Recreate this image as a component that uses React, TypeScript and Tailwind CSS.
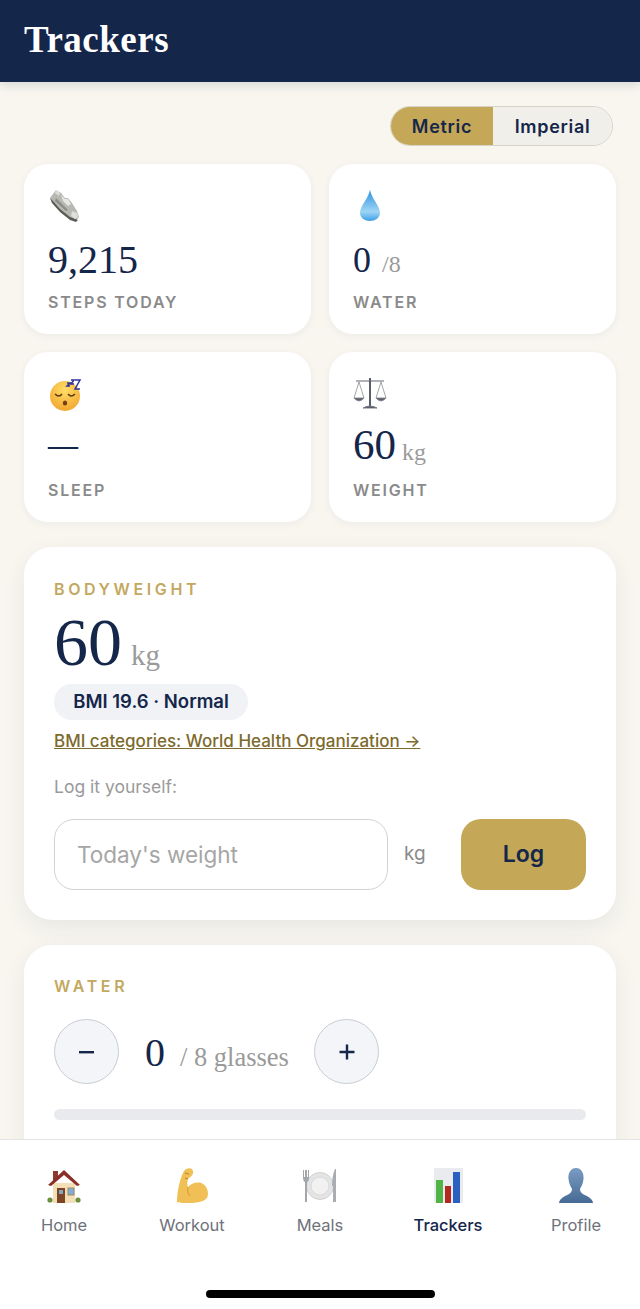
import type { ReactNode } from "react";

const serif = "font-['Liberation_Serif',serif]";

function ShoeIcon() {
  return (
    <svg width="34" height="34" viewBox="0 0 34 34">
      <path d="M8 1 L13 4 L17 9 L20 9 L24 14 L29 22 L31 28 L28 32 L22 29 L12 21 L4 13 L2 9 Z" fill="#b8b8b2" />
      <path d="M2 9 L4 14 L12 23 L22 31 L28 33 L30 31 L22 28 L12 20 L5 12 Z" fill="#5a5a54" />
      <path d="M13 6 L17 10 L20 10 L23 15 L20 17 L15 12 Z" fill="#e6e6e2" />
      <path d="M8 9 L20 21 L18 22 L7 12 Z" fill="#8e8e88" />
      <path d="M24 22 L29 24 L30 28 L27 30 L23 27 Z" fill="#dededa" />
      <path d="M8 1 L12 4 L11 7 L7 4 Z" fill="#dcdcd8" />
    </svg>
  );
}

function DropIcon() {
  return (
    <svg width="34" height="34" viewBox="0 0 34 34">
      <defs>
        <linearGradient id="drop" x1="0" y1="0" x2="0" y2="1">
          <stop offset="0" stopColor="#2f93dd" />
          <stop offset="0.7" stopColor="#9ed5f6" />
          <stop offset="1" stopColor="#3d9fe6" />
        </linearGradient>
      </defs>
      <path d="M17 1 C19 10 27 17 27 24 C27 29 22 32 17 32 C12 32 7 29 7 24 C7 17 15 10 17 1 Z" fill="url(#drop)" />
    </svg>
  );
}

function SleepIcon() {
  return (
    <svg width="34" height="34" viewBox="0 0 34 34">
      <defs>
        <radialGradient id="face" cx="0.5" cy="0.3" r="0.8">
          <stop offset="0" stopColor="#ffdd67" />
          <stop offset="1" stopColor="#f0a028" />
        </radialGradient>
      </defs>
      <circle cx="17" cy="19" r="15" fill="url(#face)" />
      <path d="M7 17 Q11 21 14 17 M20 17 Q23 21 27 17" stroke="#5c3a10" strokeWidth="1.4" fill="none" />
      <ellipse cx="17" cy="26" rx="2.2" ry="2.6" fill="#7a3b16" />
      <path d="M19 6 h3 l-3 3 h3 M23 3 h3 l-3 4 h3 M27 3 h5 l-5 9 h5" stroke="#33329a" strokeWidth="1.5" fill="none" />
    </svg>
  );
}

function ScalesIcon() {
  return (
    <svg width="34" height="34" viewBox="0 0 34 34" fill="none" stroke="#7b7f88">
      <path d="M3 4 H31" strokeWidth="1.2" />
      <path d="M17 1 V29" stroke="#5a5e68" strokeWidth="2" />
      <path d="M6 5 L1 21 M6 5 L11 21 M28 5 L23 21 M28 5 L33 21" strokeWidth="0.7" />
      <path d="M1 21 Q6 27 11 21 Z M23 21 Q28 27 33 21 Z" fill="#5f636c" strokeWidth="0.8" />
      <path d="M10 31 Q17 27 24 31 Z" fill="#3f434d" strokeWidth="1" />
    </svg>
  );
}

function HouseIcon() {
  return (
    <svg width="36" height="36" viewBox="0 0 36 36">
      <circle cx="4" cy="32" r="2.6" fill="#6b8f3a" />
      <circle cx="32" cy="32" r="2.6" fill="#6b8f3a" />
      <rect x="7" y="15" width="22" height="20" fill="#f3dfb6" />
      <rect x="7" y="3" width="5" height="9" fill="#8e3a2e" />
      <path d="M2 17 L18 2 L34 17 L31 18 L18 7 L5 18 Z" fill="#8a2f28" />
      <rect x="11" y="20" width="8" height="15" fill="#7e4426" />
      <rect x="13" y="22" width="4" height="4" fill="#7fa7c4" />
      <rect x="22" y="20" width="6" height="7" fill="#78aee0" stroke="#a9865a" />
    </svg>
  );
}

function MuscleIcon() {
  return (
    <svg width="36" height="36" viewBox="0 0 36 36">
      <path
        d="M10 3 C12 0 18 -1 19 3 C20 7 16 9 14 11 C13 14 13 17 14 19 C17 15 25 13 29 16 C34 19 35 26 33 30 C30 34 22 35 15 35 C11 35 6 35 3 34 C3 26 5 12 10 3 Z"
        fill="#f0bf55"
      />
      <path d="M11 5 L15 6 M14 11 L11 10" stroke="#b8862a" strokeWidth="1" fill="none" />
      <path d="M14 19 C13 23 14 26 16 28" stroke="#d99b30" strokeWidth="1" fill="none" />
    </svg>
  );
}

function PlateIcon() {
  return (
    <svg width="36" height="36" viewBox="0 0 36 36">
      <circle cx="18" cy="18" r="13.5" fill="#e4e4e4" stroke="#d2d2d2" />
      <circle cx="18" cy="18" r="9" fill="#f1f1f1" stroke="#dadada" />
      <path d="M1 2 V10 Q1 13 3 14 V34 H5 V14 Q7 13 7 10 V2 H6 V9 H5 V2 H3 V9 H2 V2 Z" fill="#a3a7ab" />
      <path d="M33 1 Q30 8 30 18 H31 V34 H34 V1 Z" fill="#a9adb1" />
    </svg>
  );
}

function ChartIcon() {
  return (
    <svg width="36" height="36" viewBox="0 0 36 36">
      <rect x="4" y="0" width="29" height="35" fill="#e9ebee" />
      <rect x="6" y="12" width="7" height="23" fill="#52b447" />
      <rect x="15" y="18" width="6" height="17" fill="#b5271f" />
      <rect x="23" y="4" width="7" height="31" fill="#2a61c0" />
    </svg>
  );
}

function BustIcon() {
  return (
    <svg width="36" height="36" viewBox="0 0 36 36">
      <defs>
        <linearGradient id="bust" x1="0" y1="0" x2="0" y2="1">
          <stop offset="0" stopColor="#7a9cc4" />
          <stop offset="1" stopColor="#456a94" />
        </linearGradient>
      </defs>
      <path
        d="M18 0 C24 0 26 6 25.5 11 C25 16 23 19 22 21 C22 24 24 26 29 28 C33 30 35 33 35 35 H1 C1 33 3 30 7 28 C12 26 14 24 14 21 C13 19 11 16 10.5 11 C10 6 12 0 18 0 Z"
        fill="url(#bust)"
      />
    </svg>
  );
}

function StatCard({
  icon,
  value,
  valueClass,
  unit,
  unitClass,
  label,
}: {
  icon: ReactNode;
  value: string;
  valueClass: string;
  unit?: string;
  unitClass?: string;
  label: string;
}) {
  return (
    <div className="h-[170px] rounded-[24px] bg-white pl-6 pt-[25px] shadow-[0_2px_8px_rgba(20,38,74,0.05)]">
      <div className="h-[34px]">{icon}</div>
      <div className={`${serif} mt-[14px] flex h-[46px] items-baseline text-[#14264a]`}>
        <span className={`leading-[46px] ${valueClass}`}>{value}</span>
        {unit && <span className={`text-[24px] text-[#9a9a9a] ${unitClass}`}>{unit}</span>}
      </div>
      <div className="mt-[9px] text-[16px] leading-[20px] font-semibold tracking-[1.8px] text-[#8a8a8a]">{label}</div>
    </div>
  );
}

function SectionLabel({ children }: { children: ReactNode }) {
  return <div className="text-[16px] leading-[20px] font-semibold tracking-[3.6px] text-[#c3a85f]">{children}</div>;
}

function RoundButton({ children }: { children: ReactNode }) {
  return (
    <button className="flex h-[65px] w-[65px] items-center justify-center rounded-full border-[1.5px] border-[#c9ccd2] bg-[#f3f5f9] text-[#14264a]">
      {children}
    </button>
  );
}

function NavItem({ icon, label, active }: { icon: ReactNode; label: string; active?: boolean }) {
  return (
    <div className="flex w-[128px] flex-col items-center">
      <div className="h-[36px]">{icon}</div>
      <div className={`mt-[9px] text-[16.5px] leading-[24px] ${active ? "font-medium text-[#14264a]" : "text-[#6f727a]"}`}>{label}</div>
    </div>
  );
}

export default function App() {
  return (
    <div className="flex h-[1309px] w-[640px] flex-col overflow-hidden bg-[#f8f6ef] font-['Inter',sans-serif]">
      <header className="z-10 flex h-[82px] shrink-0 items-center bg-[#14264a] pb-[4px] pl-6 shadow-[0_3px_10px_rgba(20,38,74,0.15)]">
        <h1 className={`${serif} text-[37px] leading-none font-bold tracking-[0.5px] text-white`}>Trackers</h1>
      </header>

      <main className="min-h-0 flex-1 overflow-hidden px-6 pt-[24px]">
        <div className="flex justify-end pr-[3px]">
          <div className="flex h-[40px] w-[223px] overflow-hidden rounded-full border-[1.5px] border-[#d6d3c8] text-[18px] font-semibold tracking-[0.7px] text-[#14264a]">
            <div className="flex w-[102px] items-center justify-center bg-[#c4a757]">Metric</div>
            <div className="flex flex-1 items-center justify-center bg-[#f1efe9]">Imperial</div>
          </div>
        </div>

        <div className="mt-[18px] grid grid-cols-2 gap-[18px]">
          <StatCard icon={<ShoeIcon />} value="9,215" valueClass="text-[40px]" label="STEPS TODAY" />
          <StatCard icon={<DropIcon />} value="0" valueClass="text-[36px]" unit="/8" unitClass="ml-[11px]" label="WATER" />
          <StatCard icon={<SleepIcon />} value="—" valueClass="-translate-y-[3px] text-[30px] font-bold" label="SLEEP" />
          <StatCard
            icon={<ScalesIcon />}
            value="60"
            valueClass="-translate-y-[3px] text-[43px]"
            unit="kg"
            unitClass="-translate-y-[2px] ml-[6px]"
            label="WEIGHT"
          />
        </div>

        <section className="mt-[25px] h-[373px] rounded-[28px] bg-white px-[30px] pt-[32px] shadow-[0_8px_24px_rgba(20,38,74,0.07)]">
          <SectionLabel>BODYWEIGHT</SectionLabel>
          <div className={`${serif} mt-[11px] flex h-[65px] items-baseline`}>
            <span className="text-[68px] leading-[64px] text-[#14264a]">60</span>
            <span className="ml-[9px] text-[29px] text-[#9a9a9a]">kg</span>
          </div>
          <div className="mt-[9px] flex h-[36px] w-[194px] items-center justify-center rounded-full bg-[#f0f2f6] text-[18.5px] font-semibold text-[#14264a]">
            BMI 19.6 · Normal
          </div>
          <a className="mt-[10px] block text-[17px] leading-[22px] font-medium text-[#7d6a2d] underline">
            BMI categories: World Health Organization →
          </a>
          <div className="mt-[24px] text-[17.5px] leading-[22px] text-[#9a9a9a]">Log it yourself:</div>
          <div className="mt-[21px] flex h-[71px] items-stretch">
            <div className="flex w-[334px] items-center rounded-[20px] border-[1.5px] border-[#d2d2d2] bg-white pl-[22px] text-[22.5px] text-[#a6a6a6]">
              Today's weight
            </div>
            <div className="ml-[16px] flex w-[57px] items-center text-[19px] text-[#8a8a8a]">kg</div>
            <button className="w-[125px] rounded-[20px] bg-[#c4a757] text-[23px] font-semibold text-[#14264a]">Log</button>
          </div>
        </section>

        <section className="mt-[25px] h-[240px] rounded-[28px] bg-white px-[30px] pt-[31px] shadow-[0_8px_24px_rgba(20,38,74,0.07)]">
          <SectionLabel>WATER</SectionLabel>
          <div className="mt-[23px] flex items-center">
            <RoundButton>
              <svg width="20" height="20" viewBox="0 0 20 20">
                <rect x="2" y="9" width="15" height="2.4" fill="#14264a" />
              </svg>
            </RoundButton>
            <div className={`${serif} ml-[26px] mt-[6px] flex w-[169px] items-baseline`}>
              <span className="text-[40px] leading-[44px] text-[#14264a]">0</span>
              <span className="ml-[15px] text-[26.5px] text-[#9a9a9a]">/ 8 glasses</span>
            </div>
            <RoundButton>
              <svg width="20" height="20" viewBox="0 0 20 20">
                <path d="M10 2.5 V17.5 M2.5 10 H17.5" stroke="#14264a" strokeWidth="2.4" />
              </svg>
            </RoundButton>
          </div>
          <div className="mt-[25px] h-[11px] rounded-full bg-[#e8eaee]" />
        </section>
      </main>

      <nav className="z-10 flex h-[170px] shrink-0 flex-col border-t border-[#e4e4e4] bg-white">
        <div className="flex pt-[28px]">
          <NavItem icon={<HouseIcon />} label="Home" />
          <NavItem icon={<MuscleIcon />} label="Workout" />
          <NavItem icon={<PlateIcon />} label="Meals" />
          <NavItem icon={<ChartIcon />} label="Trackers" active />
          <NavItem icon={<BustIcon />} label="Profile" />
        </div>
        <div className="mx-auto mt-[53px] h-[8px] w-[229px] rounded-full bg-black" />
      </nav>
    </div>
  );
}
